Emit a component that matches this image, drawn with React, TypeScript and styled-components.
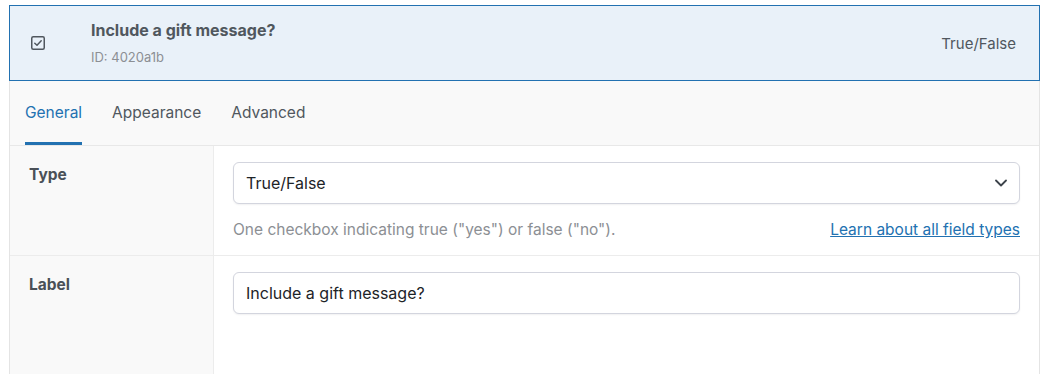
import React from "react";
import styled, { createGlobalStyle } from "styled-components";

const GlobalStyle = createGlobalStyle`
  html, body {
    margin: 0;
    padding: 0;
    background: #ffffff;
  }
  body {
    font-family: Inter, "Noto Sans", "Liberation Sans", sans-serif;
    -webkit-font-smoothing: antialiased;
  }
`;

const Panel = styled.div`
  margin: 5px 10px 0 9px;
  width: 1031px;
`;

const Header = styled.div`
  display: flex;
  align-items: center;
  height: 74px;
  padding: 0 23px 0 21px;
  background: #e9f1f9;
  border: 1px solid #2271b1;
`;

const IconCell = styled.div`
  display: flex;
  width: 14px;
  margin-right: 46px;
  color: #50575e;
`;

const TitleBlock = styled.div`
  display: flex;
  flex-direction: column;
  gap: 7px;
  flex: 1;
`;

const Title = styled.div`
  font-size: 16px;
  line-height: 20px;
  font-weight: 700;
  color: #50575e;
`;

const FieldId = styled.div`
  font-size: 13px;
  line-height: 20px;
  color: #8c8f94;
`;

const TypeName = styled.div`
  font-size: 15px;
  color: #50575e;
`;

const Body = styled.div`
  border-left: 1px solid #e4e4e4;
  border-right: 1px solid #e4e4e4;
`;

const TabBar = styled.div`
  display: flex;
  align-items: flex-end;
  gap: 30px;
  height: 64px;
  padding-left: 15px;
  background: #f9f9f9;
  border-bottom: 1px solid #e8e8e8;
`;

const Tab = styled.div<{ $active?: boolean }>`
  font-size: 15.5px;
  line-height: 20px;
  padding-bottom: 19px;
  color: ${(p) => (p.$active ? "#2271b1" : "#50575e")};
  border-bottom: 3px solid ${(p) => (p.$active ? "#2271b1" : "transparent")};
`;

const Row = styled.div<{ $last?: boolean }>`
  display: grid;
  grid-template-columns: 204px 1fr;
  border-bottom: ${(p) => (p.$last ? "none" : "1px solid #ececec")};
  min-height: ${(p) => (p.$last ? "118px" : "auto")};
`;

const LabelCell = styled.div`
  padding: 19px 19px 0;
  background: #f9f9f9;
  border-right: 1px solid #ececec;
  font-size: 15.5px;
  line-height: 20px;
  font-weight: 700;
  color: #4a5057;
`;

const InputCell = styled.div`
  padding: 16px 19px 15px 19px;
  background: #ffffff;
`;

const Box = styled.div`
  display: flex;
  align-items: center;
  justify-content: space-between;
  height: 40px;
  padding: 0 12px;
  border: 1px solid #d3d5de;
  border-radius: 6px;
  box-shadow: 0 1px 2px rgba(16, 24, 40, 0.06);
  background: #ffffff;
  font-size: 16px;
  color: #1d2327;
`;

const HelpRow = styled.div`
  display: flex;
  justify-content: space-between;
  margin-top: 16px;
  font-size: 15.5px;
  line-height: 20px;
`;

const Help = styled.span`
  color: #8c8f94;
`;

const HelpLink = styled.a`
  color: #2271b1;
  text-decoration: underline;
`;

const CheckIcon = () => (
  <svg width="14" height="14" viewBox="0 0 14 14" fill="none">
    <rect x="0.75" y="0.75" width="12.5" height="12.5" rx="1.5" stroke="currentColor" strokeWidth="1.5" />
    <path d="M3.8 7.2 L6 9.2 L10.2 4.8" stroke="currentColor" strokeWidth="1.5" strokeLinecap="round" strokeLinejoin="round" />
  </svg>
);

const Chevron = () => (
  <svg width="12" height="8" viewBox="0 0 12 8" fill="none">
    <path d="M1 1.5 L6 6.5 L11 1.5" stroke="#3c434a" strokeWidth="1.8" strokeLinecap="round" strokeLinejoin="round" />
  </svg>
);

export default function App() {
  return (
    <>
      <GlobalStyle />
      <Panel>
        <Header>
          <IconCell>
            <CheckIcon />
          </IconCell>
          <TitleBlock>
            <Title>Include a gift message?</Title>
            <FieldId>ID: 4020a1b</FieldId>
          </TitleBlock>
          <TypeName>True/False</TypeName>
        </Header>
        <Body>
          <TabBar>
            <Tab $active>General</Tab>
            <Tab>Appearance</Tab>
            <Tab>Advanced</Tab>
          </TabBar>
          <Row>
            <LabelCell>Type</LabelCell>
            <InputCell>
              <Box>
                <span>True/False</span>
                <Chevron />
              </Box>
              <HelpRow>
                <Help>One checkbox indicating true ("yes") or false ("no").</Help>
                <HelpLink href="#">Learn about all field types</HelpLink>
              </HelpRow>
            </InputCell>
          </Row>
          <Row $last>
            <LabelCell>Label</LabelCell>
            <InputCell>
              <Box>
                <span>Include a gift message?</span>
              </Box>
            </InputCell>
          </Row>
        </Body>
      </Panel>
    </>
  );
}
